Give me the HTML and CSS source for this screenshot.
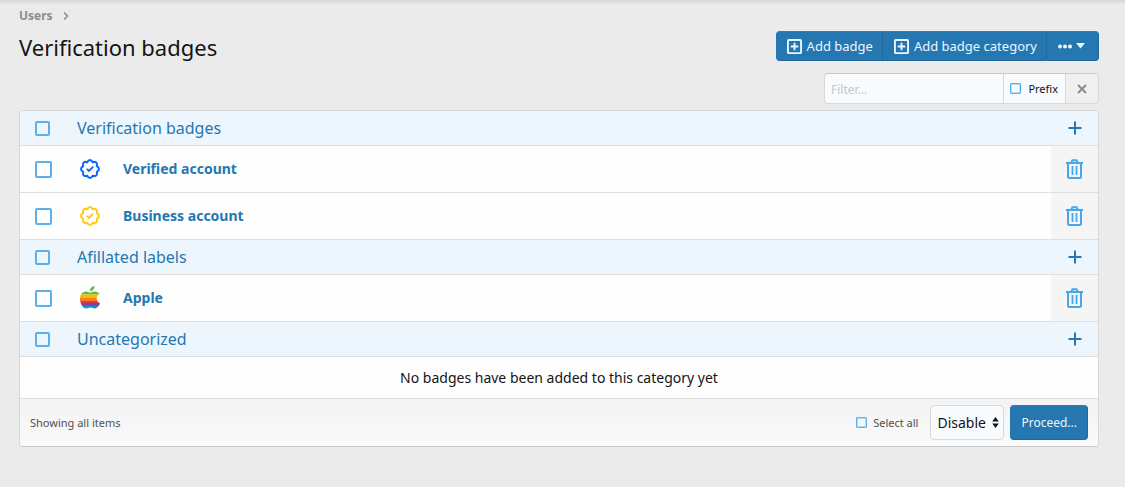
FILE: index.html
```html
<!DOCTYPE html>
<html lang="en">
<head>
<meta charset="utf-8">
<title>Verification badges</title>
<link rel="stylesheet" href="styles.css">
</head>
<body>
<svg class="sprite" aria-hidden="true">
  <symbol id="i-plus-square" viewBox="0 0 16 16"><rect x="1" y="1" width="14" height="14" rx="1" fill="none" stroke="currentColor" stroke-width="2"/><path d="M8 4v8M4 8h8" stroke="currentColor" stroke-width="2"/></symbol>
  <symbol id="i-plus" viewBox="0 0 14 14"><path d="M7 .5v13M.5 7h13" stroke="currentColor" stroke-width="2"/></symbol>
  <symbol id="i-trash" viewBox="0 0 17 20"><path d="M0 4h17M5 4l1.500-2.800h4L12 4M2 4.500v13q0 1.500 1.500 1.500h10q1.500 0 1.500-1.500v-13" fill="none" stroke="currentColor" stroke-width="2"/><path d="M6.500 7v9M10.500 7v9" stroke="currentColor" stroke-width="1.800"/></symbol>
  <symbol id="i-verified" viewBox="0 0 20 20"><path d="M10 1 Q11.700 1 12.800 3.200 Q15.200 2.400 16.400 3.600 Q17.600 4.800 16.800 7.200 Q19 8.300 19 10 Q19 11.700 16.800 12.800 Q17.600 15.200 16.400 16.400 Q15.200 17.600 12.800 16.800 Q11.700 19 10 19 Q8.300 19 7.200 16.800 Q4.800 17.600 3.600 16.400 Q2.400 15.200 3.200 12.800 Q1 11.700 1 10 Q1 8.300 3.200 7.200 Q2.400 4.800 3.600 3.600 Q4.800 2.400 7.200 3.200 Q8.300 1 10 1Z" fill="none" stroke="currentColor" stroke-width="2" stroke-linejoin="round"/><path d="M6.800 9.800l2.200 2.200 4.200-4.300" fill="none" stroke="currentColor" stroke-width="1.900"/></symbol>
</svg>

<header class="page-head">
  <nav class="crumbs" aria-label="Breadcrumb"><a href="#">Users</a><svg class="crumb-arrow" viewBox="0 0 6 8"><path d="M1 .5L4.500 4 1 7.500" fill="none" stroke="currentColor" stroke-width="1.500"/></svg></nav>
  <div class="title-bar">
    <h1>Verification badges</h1>
    <div class="button-group">
      <a class="button" href="#"><svg class="button-icon"><use href="#i-plus-square"/></svg>Add badge</a>
      <a class="button" href="#"><svg class="button-icon"><use href="#i-plus-square"/></svg>Add badge category</a>
      <button class="button more" type="button" aria-label="More options"><svg class="more-icon" viewBox="0 0 27 8"><circle cx="2" cy="4.500" r="2"/><circle cx="7" cy="4.500" r="2"/><circle cx="12" cy="4.500" r="2"/><path d="M18 1h9l-4.500 5.500z"/></svg></button>
    </div>
  </div>
</header>

<main>
  <form class="filter">
    <input class="filter-text" type="text" placeholder="Filter..." aria-label="Filter">
    <label class="filter-prefix"><input class="check small" type="checkbox">Prefix</label>
    <button class="filter-clear" type="button" aria-label="Clear"><svg viewBox="0 0 10 10"><path d="M1 1l8 8M9 1L1 9" stroke="currentColor" stroke-width="2"/></svg></button>
  </form>

  <form class="block">
    <table class="list">
      <colgroup><col class="col-check"><col class="col-icon"><col><col class="col-action"></colgroup>
      <tbody>
        <tr class="category">
          <td class="cell-check"><input class="check medium" type="checkbox" aria-label="Verification badges"></td>
          <td class="cell-name" colspan="2"><a href="#">Verification badges</a></td>
          <td class="cell-action"><a href="#" aria-label="Add badge"><svg class="plus"><use href="#i-plus"/></svg></a></td>
        </tr>
        <tr>
          <td class="cell-check"><input class="check" type="checkbox" aria-label="Verified account"></td>
          <td class="cell-icon"><svg class="badge blue"><use href="#i-verified"/></svg></td>
          <td class="cell-name"><a href="#">Verified account</a></td>
          <td class="cell-action"><a href="#" aria-label="Delete"><svg class="trash"><use href="#i-trash"/></svg></a></td>
        </tr>
        <tr>
          <td class="cell-check"><input class="check" type="checkbox" aria-label="Business account"></td>
          <td class="cell-icon"><svg class="badge yellow"><use href="#i-verified"/></svg></td>
          <td class="cell-name"><a href="#">Business account</a></td>
          <td class="cell-action"><a href="#" aria-label="Delete"><svg class="trash"><use href="#i-trash"/></svg></a></td>
        </tr>
        <tr class="category">
          <td class="cell-check"><input class="check medium" type="checkbox" aria-label="Afillated labels"></td>
          <td class="cell-name" colspan="2"><a href="#">Afillated labels</a></td>
          <td class="cell-action"><a href="#" aria-label="Add badge"><svg class="plus"><use href="#i-plus"/></svg></a></td>
        </tr>
        <tr>
          <td class="cell-check"><input class="check" type="checkbox" aria-label="Apple"></td>
          <td class="cell-icon"><svg class="apple" viewBox="0 0 20 24">
            <clipPath id="apple-shape"><path d="M14.500 0c.3 2.600-1.900 5.300-4.600 5.200C9.700 2.700 11.900.3 14.500 0zM10.200 6.700c1 0 2.500-1.200 4.600-1.200 2 0 3.700 1 4.600 2.500-4 2.300-3.300 7.700.6 9.200-.9 2.600-3 5.300-5.200 5.300-1.600 0-2.400-1-4.400-1s-2.900 1-4.400 1C3.200 22.500 0 17.700 0 13.200 0 8.400 2.800 5.600 5.900 5.600c1.800 0 3.200 1.100 4.300 1.100z"/></clipPath>
            <g clip-path="url(#apple-shape)"><path fill="#5ebd3e" d="M0 0h20v8.500H0z"/><path fill="#ffb900" d="M0 8.500h20v3H0z"/><path fill="#f78200" d="M0 11.500h20v3H0z"/><path fill="#e23838" d="M0 14.500h20v2.500H0z"/><path fill="#973999" d="M0 17h20v3H0z"/><path fill="#009cdf" d="M0 20h20v4H0z"/></g>
          </svg></td>
          <td class="cell-name"><a href="#">Apple</a></td>
          <td class="cell-action"><a href="#" aria-label="Delete"><svg class="trash"><use href="#i-trash"/></svg></a></td>
        </tr>
        <tr class="category">
          <td class="cell-check"><input class="check medium" type="checkbox" aria-label="Uncategorized"></td>
          <td class="cell-name" colspan="2"><a href="#">Uncategorized</a></td>
          <td class="cell-action"><a href="#" aria-label="Add badge"><svg class="plus"><use href="#i-plus"/></svg></a></td>
        </tr>
        <tr class="empty"><td colspan="4">No badges have been added to this category yet</td></tr>
      </tbody>
    </table>
    <footer class="block-foot">
      <span class="count">Showing all items</span>
      <label class="select-all"><input class="check small" type="checkbox">Select all</label>
      <select class="action" aria-label="Action"><option>Disable</option></select>
      <button class="button proceed" type="button">Proceed...</button>
    </footer>
  </form>
</main>
</body>
</html>
```
FILE: styles.css
```css
* { box-sizing: border-box; }

body {
  margin: 0;
  padding: 8px 26px 40px 19px;
  background: #ebebeb linear-gradient(#d6d6d6, #ebebeb) no-repeat 0 0 / 100% 5px;
  color: #141414;
  font: 14px/20px "Noto Sans", "Open Sans", sans-serif;
}

a { color: #2577b1; text-decoration: none; }
svg { display: block; }
button, input, select { font-family: inherit; margin: 0; }
.sprite { position: absolute; width: 0; height: 0; }

.crumbs {
  display: flex;
  align-items: center;
  gap: 10px;
  height: 16px;
  color: #8c8c8c;
  font-size: 12px;
  font-weight: 700;
}
.crumbs a { color: inherit; }
.crumb-arrow { width: 6px; height: 8px; }

.title-bar {
  display: flex;
  justify-content: space-between;
  padding-top: 7px;
}
h1 {
  margin: 0;
  font-size: 22px;
  font-weight: 400;
  line-height: 32px;
}

.button-group { display: flex; }
.button {
  display: flex;
  align-items: center;
  gap: 5px;
  height: 30px;
  padding: 0 10px;
  border: 1px solid #21699c;
  border-color: #2a7fbb #21699c #21699c #2577b1;
  border-radius: 4px;
  background: #2577b1;
  color: #edf6fd;
  font-size: 13px;
}
.button-group .button { border-radius: 0; padding: 0 9px 0 10px; }
.button-group .button:first-child { border-radius: 4px 0 0 4px; }
.button-group .button:last-child { border-radius: 0 4px 4px 0; }
.button-icon { width: 15px; height: 15px; }
.more-icon { width: 27px; height: 8px; fill: currentColor; }
.button-group .more { padding: 0 13px 0 10px; }

.check {
  appearance: none;
  display: block;
  flex: none;
  width: 17px;
  height: 17px;
  border: 2px solid #5bb0ea;
  border-radius: 2px;
}
.check.medium { width: 15px; height: 15px; }
.check.small { width: 11px; height: 11px; border-width: 1px; border-radius: 1px; box-shadow: inset 0 0 0 1px #b5dcf7; }

.filter {
  display: flex;
  width: 275px;
  height: 31px;
  margin: 10px 0 6px auto;
  border: 1px solid #d8d8d8;
  border-top-color: #c9c9c9;
  border-radius: 4px;
  background: #f8fbfe;
  overflow: hidden;
  font-size: 11px;
}
.filter-text {
  flex: 1;
  min-width: 0;
  padding: 2px 6px 0;
  border: 0;
  background: none;
  font-size: 12px;
}
.filter-text::placeholder { color: #c5c8cb; opacity: 1; }
.filter-prefix {
  display: flex;
  align-items: center;
  gap: 7px;
  padding: 0 7px 0 6px;
  border-left: 1px solid #d8d8d8;
}
.filter-clear {
  display: flex;
  align-items: center;
  justify-content: center;
  width: 33px;
  padding: 0;
  border: 0;
  border-left: 1px solid #d8d8d8;
  background: #f0f0f0;
  color: #8c8c8c;
}
.filter-clear svg { width: 10px; height: 10px; }

.block {
  border: 1px solid #d8d8d8;
  border-bottom-color: #c9c9c9;
  border-radius: 4px;
  background: #fefefe;
  overflow: hidden;
}
.list {
  width: 100%;
  table-layout: fixed;
  border-spacing: 0;
}
.col-check, .col-action { width: 47px; }
.col-icon { width: 46px; }
.list td {
  height: 47px;
  padding: 0;
  border-bottom: 1px solid #dfdfdf;
}
.list .category td { height: 35px; background: #edf6fd; }
.list .cell-check { padding-left: 15px; }
.list .cell-name { padding-left: 10px; font-weight: 700; }
.list .category .cell-name { font-size: 16px; font-weight: 400; }
.list .cell-action { background: #f5f5f5; }
.cell-action svg, .cell-icon svg { margin: 0 auto; }
.plus { width: 14px; height: 14px; }
.trash { width: 17px; height: 20px; color: #47a7eb; }
.badge { width: 20px; height: 20px; }
.blue { color: #0a66ff; }
.yellow { color: #ffcc14; }
.apple { width: 20px; height: 24px; }
.list .empty td { height: 42px; text-align: center; }

.block-foot {
  display: flex;
  align-items: center;
  gap: 6px;
  padding: 6px 10px;
  background: linear-gradient(#f3f3f3, #fafafa);
  color: #505050;
  font-size: 11px;
}
.count { flex: 1; }
.select-all {
  display: flex;
  align-items: center;
  gap: 6px;
  margin-right: 6px;
}
.action {
  appearance: none;
  width: 74px;
  height: 35px;
  padding: 0 6px;
  border: 1px solid #d8d8d8;
  border-radius: 4px;
  background: #f8fbfe url("data:image/svg+xml,%3Csvg xmlns='http://www.w3.org/2000/svg' viewBox='0 0 6 10'%3E%3Cpath d='M0 4L3 0l3 4zM0 6h6l-3 4z' fill='%23141414'/%3E%3C/svg%3E") no-repeat right 4px center / 7px 11px;
  color: #141414;
  font-size: 14px;
}
.proceed { height: 35px; font-size: 12px; }
```
